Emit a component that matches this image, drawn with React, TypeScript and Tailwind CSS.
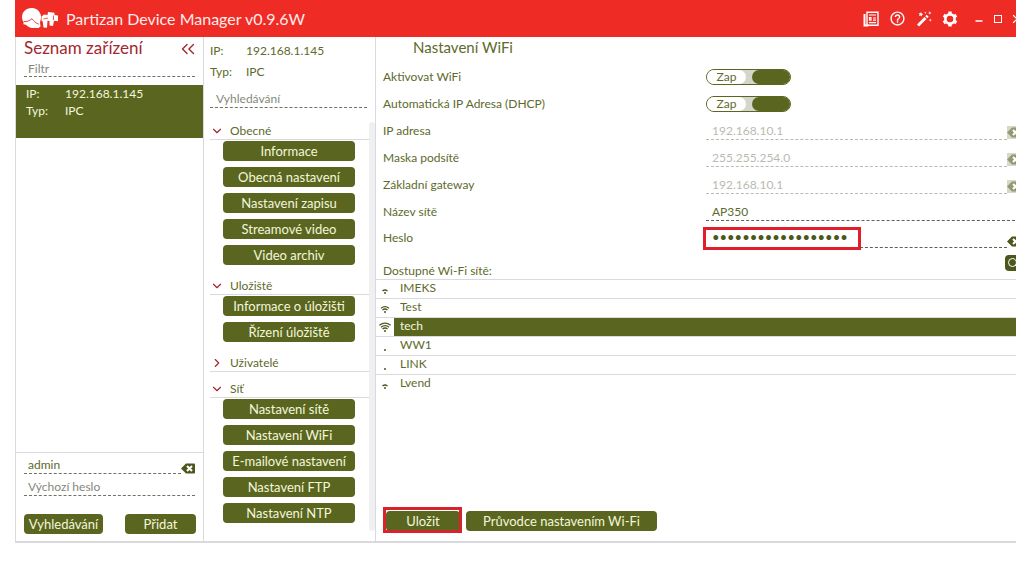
import { useState } from "react";
import { ChevronDown, ChevronRight, ChevronsLeft, Minus, Search, X } from "lucide-react";
import { MdHelpOutline } from "react-icons/md";

type Section = { title: string; open: boolean; items: string[] };

const SECTIONS: Section[] = [
  {
    title: "Obecné",
    open: true,
    items: [
      "Informace",
      "Obecná nastavení",
      "Nastavení zapisu",
      "Streamové video",
      "Video archiv",
    ],
  },
  {
    title: "Uložiště",
    open: true,
    items: ["Informace o úložišti", "Řízení úložiště"],
  },
  { title: "Uživatelé", open: false, items: [] },
  {
    title: "Síť",
    open: true,
    items: [
      "Nastavení sítě",
      "Nastavení WiFi",
      "E-mailové nastavení",
      "Nastavení FTP",
      "Nastavení NTP",
    ],
  },
];

const ADDRESSES = [
  { id: "ip", label: "IP adresa", value: "192.168.10.1" },
  { id: "mask", label: "Maska podsítě", value: "255.255.254.0" },
  { id: "gateway", label: "Základní gateway", value: "192.168.10.1" },
];

const NETWORKS = [
  { name: "IMEKS", level: 1 },
  { name: "Test", level: 2 },
  { name: "tech", level: 3 },
  { name: "WW1", level: 0 },
  { name: "LINK", level: 0 },
  { name: "Lvend", level: 1 },
];

const BUTTON = "h-5 rounded-[4px] bg-[#5a661f] text-[13px] leading-5 text-[#f4f6dc] text-center whitespace-nowrap";

function Logo() {
  return (
    <svg viewBox="0 0 38 24" className="w-[38px] h-6 shrink-0">
      <path
        d="M10.500 1C5 1 1 5 1 10c0 2 .6 3.600 1.700 5l-.4 2.200 2.600.6c1.700 2 4 3.200 6.600 3.200h6l2-1.500-.5-4 1-4.300c.3-1.200.1-2.300-.3-3.500C18.500 3.500 15 1 10.500 1Z"
        fill="#fff"
      />
      <path d="M3 14.500c3 .3 5.500-.6 8-2.800M11 11.700c1.600 2.500 3.800 4.300 6.800 5.500" fill="none" stroke="#ee2b24" strokeWidth=".9" />
      <path d="m20.500 9.500 2.500-2 3.500.5.500-3 6.500.8V8l3.500.6v5.600l-4-.4-1 5.200-3.500-.5v-4.500l-2-.2-.5 7-3.500-.3-.8-6-1.200-1Z" fill="#fff" />
      <path d="m22.500 12 4.500-1M32.500 8.500v4.500" fill="none" stroke="#ee2b24" strokeWidth=".8" />
    </svg>
  );
}

function NewsIcon() {
  return (
    <svg viewBox="0 0 16 16" className="w-4 h-4" fill="none" stroke="#fff">
      <path d="M4 1.200h11v13H4Z" strokeWidth="1.400" />
      <path d="M1.500 3v11.500h4" strokeWidth="2" />
      <path d="M6 4h7M10 7h3M10 9.200h3M6 11.700h7" strokeWidth="1.200" />
      <path d="M6.500 6.700h1.500v2.500H6.500Z" strokeWidth="1.200" />
    </svg>
  );
}

function WandIcon() {
  return (
    <svg viewBox="0 0 16 16" className="w-4 h-4" fill="#fff">
      <path d="m1 13.500 7.500-7.500 2 2L3 15.500Z" />
      <path d="m9.300 5.200 1.400-1.400 2 2-1.400 1.400Z" />
      <path d="m5 1 .7 1.600L7.300 3l-1.400.9L6 5.500 4.600 4.600 3 5.100l.6-1.600-1-1.300 1.700.1ZM13.800.2l.5 1.300 1.400.5-1.400.5-.5 1.300-.5-1.300L12 2l1.300-.5ZM14.200 7.500l.5 1.200 1.200.4-1.200.5-.5 1.200-.4-1.200-1.300-.5 1.300-.4ZM9.300.5l.4.900.9.4-.9.300-.4.900-.4-.9-.9-.3.900-.4Z" />
    </svg>
  );
}

function GearIcon() {
  return (
    <svg viewBox="0 0 16 16" className="w-4 h-4" fill="none" stroke="#fff">
      <circle cx="8" cy="8" r="4.600" strokeWidth="2.600" />
      <path d="M8 .6v2.800M8 12.600v2.800M1.600 4.300 4 5.700M12 10.300l2.400 1.400M1.600 11.700 4 10.300M12 5.700l2.400-1.400" strokeWidth="3.400" />
    </svg>
  );
}

function ClearIcon() {
  return (
    <svg viewBox="0 0 14 11" className="w-3.5 h-[11px]">
      <path d="M0 5.500 5 .5h8q1 0 1 1v8q0 1-1 1H5Z" fill="#4b571c" />
      <path d="m6 3 5 5m0-5-5 5" stroke="#fff" strokeWidth="2" />
    </svg>
  );
}

function SignalIcon({ level }: { level: number }) {
  return (
    <svg viewBox="0 0 12 11" className="w-3 h-[11px]" fill="none" stroke="#4b571c" strokeWidth="1.300">
      <circle cx="6" cy="9" r="1" fill="#4b571c" stroke="none" />
      {level > 0 && <path d="M3.500 7q2.500-2 5 0" />}
      {level > 1 && <path d="M2 5.200q4-3.200 8 0" />}
      {level > 2 && <path d="M.4 3.300q5.600-4.300 11.200 0" />}
    </svg>
  );
}

function Toggle({ label }: { label: string }) {
  const [on, setOn] = useState(true);
  return (
    <button
      type="button"
      role="switch"
      aria-checked={on}
      aria-label={label}
      onClick={() => setOn(!on)}
      className="flex w-[85px] h-4 rounded-full border border-[#5a661f] bg-[#d4d6cb] overflow-hidden"
    >
      <span className="w-[39px] h-full rounded-r-lg bg-white text-[12px] leading-[14px] text-center">
        {on ? "Zap" : "Vyp"}
      </span>
      <span className="ml-auto w-[38px] h-full rounded-l-full bg-[#5a661f]" />
    </button>
  );
}

function Sidebar() {
  return (
    <aside className="flex flex-col border-x border-[#d9d9de]">
      <div className="flex items-center justify-between h-6 pl-2 pr-1">
        <h2 className="text-[17px] leading-[22px] h-6 text-[#a3272f]">Seznam zařízení</h2>
        <button type="button" aria-label="Skrýt seznam" className="h-6 text-[#a3272f]">
          <ChevronsLeft size={22} strokeWidth={1.5} />
        </button>
      </div>
      <input
        aria-label="Filtr"
        placeholder="Filtr"
        className="h-4 mx-2 px-1 text-[12px] border-b border-dashed border-[#6f7361] placeholder:text-[#85887c] outline-none"
      />
      <button
        type="button"
        className="mt-2 h-[53px] px-2.5 bg-[#5a661f] text-[#f4f6dc] text-[12px] leading-[17px] text-left flex flex-col"
      >
        <span className="flex"><span className="w-[39px]">IP:</span>192.168.1.145</span>
        <span className="flex"><span className="w-[39px]">Typ:</span>IPC</span>
      </button>
      <form className="mt-auto border-t border-[#d9d9de] px-2 pt-1 pb-[7px]" onSubmit={(e) => e.preventDefault()}>
        <div className="flex items-end">
          <input
            aria-label="Uživatel"
            defaultValue="admin"
            className="min-w-0 flex-1 h-[17px] px-1 text-[12px] border-b border-dashed border-[#6f7361] outline-none"
          />
          <button type="button" aria-label="Vymazat"><ClearIcon /></button>
        </div>
        <input
          aria-label="Výchozí heslo"
          placeholder="Výchozí heslo"
          className="block w-full h-[17px] mt-[5px] px-1 text-[12px] border-b border-dashed border-[#6f7361] placeholder:text-[#85887c] outline-none"
        />
        <div className="flex justify-between mt-[18px] -mr-px">
          <button type="button" className={`${BUTTON} w-[79px]`}>Vyhledávání</button>
          <button type="submit" className={`${BUTTON} w-[71px]`}>Přidat</button>
        </div>
      </form>
    </aside>
  );
}

function Menu() {
  return (
    <nav className="flex flex-col border-r border-[#d9d9de]">
      <dl className="pl-1.5 pt-[3px] text-[12px] leading-[21px]">
        <div className="flex"><dt className="w-9">IP:</dt><dd>192.168.1.145</dd></div>
        <div className="flex"><dt className="w-9">Typ:</dt><dd>IPC</dd></div>
      </dl>
      <input
        aria-label="Vyhledávání"
        placeholder="Vyhledávání"
        className="h-[17px] mt-[9px] ml-1.5 mr-2 px-1.5 text-[12px] border-b border-dashed border-[#6f7361] placeholder:text-[#85887c] outline-none"
      />
      <div className="flex mt-1.5 flex-1">
        <div className="flex-1 pl-1.5 pb-[18px]">
          {SECTIONS.map((section, i) => (
            <section key={section.title}>
              <h3 className={`border-b border-[#d9d9de] ${i > 0 && SECTIONS[i - 1].open ? "mt-1" : ""}`}>
                <button type="button" aria-expanded={section.open} className="flex items-center gap-1.5 w-full h-[25px] pt-2 text-[12px]">
                  {section.open ? (
                    <ChevronDown size={14} strokeWidth={2} color="#a3272f" />
                  ) : (
                    <ChevronRight size={14} strokeWidth={2} color="#a3272f" />
                  )}
                  {section.title}
                </button>
              </h3>
              {section.open && (
                <div className="flex flex-col gap-1.5 mt-px pl-[13px] pr-3.5">
                  {section.items.map((item) => (
                    <button key={item} type="button" className={BUTTON}>{item}</button>
                  ))}
                </div>
              )}
            </section>
          ))}
        </div>
        {/* Scroll track */}
        <div className="w-1.5 mt-2 mb-2.5 rounded-full bg-[#f0f0f3]" />
      </div>
    </nav>
  );
}

function WifiSettings() {
  return (
    <main className="flex flex-col min-w-0 overflow-hidden">
      <h1 className="h-[26px] pl-[37px] text-[15px] leading-5">Nastavení WiFi</h1>
      <div className="flex flex-col pl-[7px] -mr-[5px] text-[12px]">
        <div className="flex items-center h-[27px]">
          <span className="w-[323px]">Aktivovat WiFi</span>
          <Toggle label="Aktivovat WiFi" />
        </div>
        <div className="flex items-center h-[27px]">
          <span className="w-[323px]">Automatická IP Adresa (DHCP)</span>
          <Toggle label="Automatická IP Adresa (DHCP)" />
        </div>
        {ADDRESSES.map((field) => (
          <div key={field.id} className="flex items-center h-[27px]">
            <label htmlFor={field.id} className="w-[323px]">{field.label}</label>
            <input
              id={field.id}
              disabled
              defaultValue={field.value}
              className="min-w-0 flex-1 h-[19px] px-1.5 border-b border-dashed border-[#b9bbb2] text-[#b9bbb2] outline-none"
            />
            <button type="button" disabled aria-label="Vymazat" className="mt-1 bg-[#bcc29f] py-px opacity-60">
              <ClearIcon />
            </button>
          </div>
        ))}
        <div className="flex items-center h-[27px]">
          <label htmlFor="ssid" className="w-[323px]">Název sítě</label>
          <input
            id="ssid"
            defaultValue="AP350"
            className="min-w-0 flex-1 mr-1.5 h-[19px] px-1.5 border-b border-dashed border-[#5d6150] outline-none"
          />
        </div>
        <div className="flex items-center h-[26px]">
          <label htmlFor="password" className="w-[323px]">Heslo</label>
          <div className="relative flex min-w-0 flex-1">
            <input
              id="password"
              type="password"
              defaultValue="partizan-wifi-2018"
              className="min-w-0 flex-1 h-[19px] px-1.5 text-[13px] border-b border-dashed border-[#5d6150] text-[#4b571c] outline-none"
            />
            <span className="absolute -left-[3px] -top-0.5 w-[158px] h-[23px] border-3 border-[#e01f2b] pointer-events-none" />
          </div>
          <button type="button" aria-label="Vymazat" className="mt-1.5"><ClearIcon /></button>
        </div>
        <div className="flex items-end justify-between h-7">
          <span className="leading-4">Dostupné Wi-Fi sítě:</span>
          <button type="button" aria-label="Hledat sítě" className="flex items-center justify-center w-4 h-4 mb-2 rounded-[4px] bg-[#4b571c] text-white">
            <Search size={12} />
          </button>
        </div>
      </div>
      <ul className="text-[12px] leading-4">
        {NETWORKS.map((network) => (
          <li key={network.name} className="border-t border-[#d9d9de]">
            <button type="button" className="flex w-full h-[18px] text-left">
              <span className="w-[18px] pl-[3px] pt-1">
                <SignalIcon level={network.level} />
              </span>
              <span className={`flex-1 h-full pl-1.5 ${network.name === "tech" ? "bg-[#5a661f] text-[#f4f6dc]" : ""}`}>
                {network.name}
              </span>
            </button>
          </li>
        ))}
      </ul>
      <div className="flex gap-1.5 mt-auto mb-2.5 pl-2.5">
        <div className="relative flex">
          <button type="button" className={`${BUTTON} w-[74px]`}>Uložit</button>
          <span className="absolute -left-[3px] -right-0.5 -top-1 -bottom-0.5 border-3 border-[#d8232c] pointer-events-none" />
        </div>
        <button type="button" className={`${BUTTON} w-[191px]`}>Průvodce nastavením Wi-Fi</button>
      </div>
    </main>
  );
}

export default function App() {
  return (
    <div className="min-h-screen bg-white text-[#5d6a2c] font-['Lato','Open_Sans',sans-serif]">
      <div className="ml-[15px] mr-[7px] overflow-hidden">
        <header className="flex items-center h-[37px] pl-1.5 bg-[#ee2b24] text-white">
          <Logo />
          <span className="ml-[7px] text-[16px] text-[#fdeceb]">Partizan Device Manager v0.9.6W</span>
          <div className="flex items-center gap-2.5 ml-auto -mr-2">
            <button type="button" aria-label="Novinky"><NewsIcon /></button>
            <button type="button" aria-label="Nápověda"><MdHelpOutline size={17} /></button>
            <button type="button" aria-label="Průvodce"><WandIcon /></button>
            <button type="button" aria-label="Nastavení"><GearIcon /></button>
            <button type="button" aria-label="Minimalizovat" className="ml-1.5 pt-1"><Minus size={10} strokeWidth={4} /></button>
            <button type="button" aria-label="Maximalizovat" className="w-2 h-2 border border-white" />
            <button type="button" aria-label="Zavřít" className="-ml-0.5"><X size={14} strokeWidth={2} /></button>
          </div>
        </header>
        <div className="grid grid-cols-[189px_172px_minmax(0,1fr)] border-b-2 border-[#d9d9de]">
          <Sidebar />
          <Menu />
          <WifiSettings />
        </div>
      </div>
    </div>
  );
}
